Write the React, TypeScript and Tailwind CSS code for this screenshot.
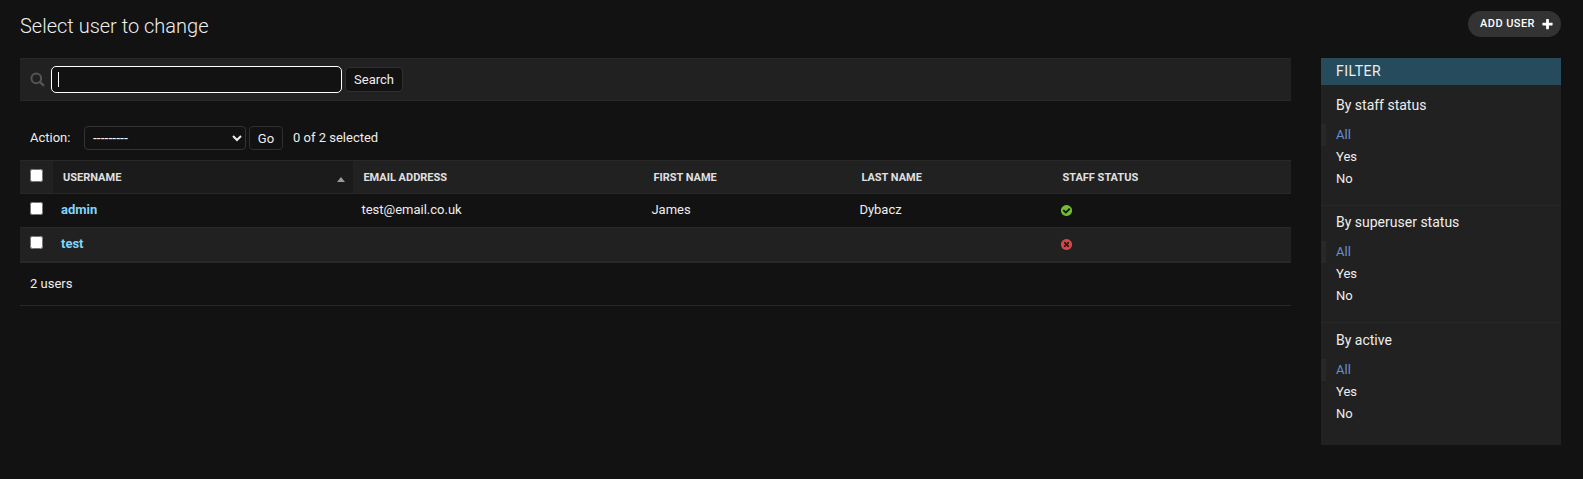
import { ReactNode } from 'react';

const filters = [
  { title: 'By staff status', box: 'h-[121px] border-b pt-[11px]' },
  { title: 'By superuser status', box: 'h-[117px] border-b pt-[7px]' },
  { title: 'By active', box: 'h-[121px] pt-[8px]' },
];

function Box() {
  return <input type="checkbox" className="block h-[13px] w-[13px] rounded-none" />;
}

function Th({ children }: { children: ReactNode }) {
  return <div className="pl-[10.4px] pt-[9px] leading-[16px]">{children}</div>;
}

function StatusIcon({ ok }: { ok: boolean }) {
  return (
    <svg width="13" height="13" viewBox="0 0 1792 1792" className="block">
      {ok ? (
        <path
          fill="#70bf2b"
          d="M1412 734q0-28-18-46l-91-90q-19-19-45-19t-45 19l-408 407-226-226q-19-19-45-19t-45 19l-91 90q-18 18-18 46 0 27 18 45l362 362q19 19 45 19 27 0 46-19l543-543q18-18 18-45zm252 162q0 209-103 385.500t-279.500 279.500-385.500 103-385.500-103-279.500-279.500-103-385.500 103-385.500 279.500-279.500 385.500-103 385.500 103 279.500 279.500 103 385.500z"
        />
      ) : (
        <path
          fill="#dd4646"
          d="M1277 1122q0-26-19-45l-181-181 181-181q19-19 19-45 0-27-19-46l-90-90q-19-19-46-19-26 0-45 19l-181 181-181-181q-19-19-45-19-27 0-46 19l-90 90q-19 19-19 46 0 26 19 45l181 181-181 181q-19 19-19 45 0 27 19 46l90 90q19 19 46 19 26 0 45-19l181-181 181 181q19 19 45 19 27 0 46-19l90-90q19-19 19-46zm387-226q0 209-103 385.500t-279.500 279.500-385.500 103-385.500-103-279.500-279.500-103-385.500 103-385.500 279.500-279.500 385.500-103 385.500 103 279.500 279.500 103 385.500z"
        />
      )}
    </svg>
  );
}

const columns = 'grid grid-cols-[33px_300px_290px_208px_201px_1fr]';

export default function App() {
  return (
    <div className="min-h-[479px] w-[1583px] bg-[#121212] pl-[20px] pr-[22px] pt-[11px] font-['Roboto',sans-serif] text-[13px] text-[#eeeeee]">
      <header className="flex h-[47px] items-start justify-between">
        <h1 className="pt-[3px] text-[20px] font-light leading-[24px]">Select user to change</h1>
        <a className="flex h-[26px] w-[93px] items-center rounded-full bg-[#333333] pl-[12px] text-[11px] font-medium tracking-[0.45px] text-white">
          <span className="w-[56px] whitespace-nowrap leading-[24px]">ADD USER</span>
          <svg width="13" height="13" viewBox="0 0 1792 1792" className="ml-[5px]">
            <path
              fill="#fff"
              d="M1600 736v192q0 40-28 68t-68 28h-416v416q0 40-28 68t-68 28h-192q-40 0-68-28t-28-68v-416h-416q-40 0-68-28t-28-68v-192q0-40 28-68t68-28h416v-416q0-40 28-68t68-28h192q40 0 68 28t28 68v416h416q40 0 68 28t28 68z"
            />
          </svg>
        </a>
      </header>

      <div className="flex items-start gap-[30px]">
        <main className="w-[1271px]">
          <div className="flex h-[43px] items-center border-y border-[#282828] bg-[#212121] pl-[10px]">
            <svg width="15" height="15" viewBox="0 0 15 15" className="mr-[6px] block">
              <circle cx="6.300" cy="6.300" r="4.900" fill="none" stroke="#555555" strokeWidth="2" />
              <path d="M10 10 13.200 13.200" stroke="#555555" strokeWidth="2.400" strokeLinecap="round" />
            </svg>
            <div className="flex h-[27px] w-[291px] items-center rounded-[5px] border border-white bg-[#121212] pl-[6px]">
              <span className="h-[15px] w-px bg-white" />
            </div>
            <button className="ml-[3px] h-[25px] w-[58px] rounded-[4px] border border-[#2f2f2f] bg-[#121212] text-center font-[450]">
              Search
            </button>
          </div>

          <div className="mt-[15px] flex h-[44px] items-center pl-[10px]">
            <span className="w-[54px]">Action:</span>
            <select className="h-[24px] w-[162px] rounded-[4px] border border-[#333333] bg-[#121212] px-[4px] text-[14px] text-[#eeeeee]">
              <option>---------</option>
            </select>
            <button className="ml-[3px] h-[24px] w-[34px] rounded-[4px] border border-[#2f2f2f] bg-[#121212] pt-[1px] font-[450]">Go</button>
            <span className="ml-[10px]">0 of 2 selected</span>
          </div>

          <div>
            <div className={`${columns} h-[34px] border-y border-[#282828] bg-[#212121] text-[11px] font-bold text-[#e0e0e0]`}>
              <div className="pl-[10px] pt-[8px]">
                <Box />
              </div>
              <div className="flex justify-between bg-[#1b1b1b] pl-[10px] pr-[8px] pt-[9px] leading-[16px]">
                USERNAME
                <svg width="8" height="5" viewBox="0 0 8 5" className="mt-[7px]">
                  <path d="M4 0 8 5H0z" fill="#999999" />
                </svg>
              </div>
              <Th>EMAIL ADDRESS</Th>
              <Th>FIRST NAME</Th>
              <Th>LAST NAME</Th>
              <Th>STAFF STATUS</Th>
            </div>
            <div className={`${columns} h-[34px] border-b border-[#282828] pt-[8px] leading-[16px]`}>
              <div className="pl-[10px]">
                <Box />
              </div>
              <a className="pl-[8px] font-bold text-[#81d4fa]">admin</a>
              <div className="pl-[8.4px]">test@email.co.uk</div>
              <div className="pl-[8.4px]">James</div>
              <div className="pl-[8.4px]">Dybacz</div>
              <div className="pl-[8px] pt-[2px]">
                <StatusIcon ok />
              </div>
            </div>
            <div className={`${columns} h-[35px] border-b-2 border-[#282828] bg-[#212121] pt-[8px] leading-[16px]`}>
              <div className="pl-[10px]">
                <Box />
              </div>
              <a className="pl-[8px] font-bold text-[#81d4fa]">test</a>
              <div />
              <div />
              <div />
              <div className="pl-[8px] pt-[2px]">
                <StatusIcon ok={false} />
              </div>
            </div>
          </div>
          <p className="h-[43px] border-b border-[#282828] pl-[10px] pt-[12px] leading-[18px]">2 users</p>
        </main>

        <aside className="h-[387px] w-[240px] bg-[#212121]">
          <h2 className="h-[27px] bg-[#264b5d] pl-[15px] text-[14px] leading-[26px] tracking-[0.5px]">FILTER</h2>
          {filters.map((f) => (
            <section key={f.title} className={`${f.box} border-[#282828]`}>
              <h3 className="mb-[10px] pl-[15px] text-[14px] leading-[18px]">{f.title}</h3>
              <ul className="leading-[22px]">
                <li className="border-l-[5px] border-[#282828] pl-[10px] text-[#6590d0]">All</li>
                <li className="pl-[15px] font-[450]">Yes</li>
                <li className="pl-[15px] font-[450]">No</li>
              </ul>
            </section>
          ))}
        </aside>
      </div>
    </div>
  );
}
